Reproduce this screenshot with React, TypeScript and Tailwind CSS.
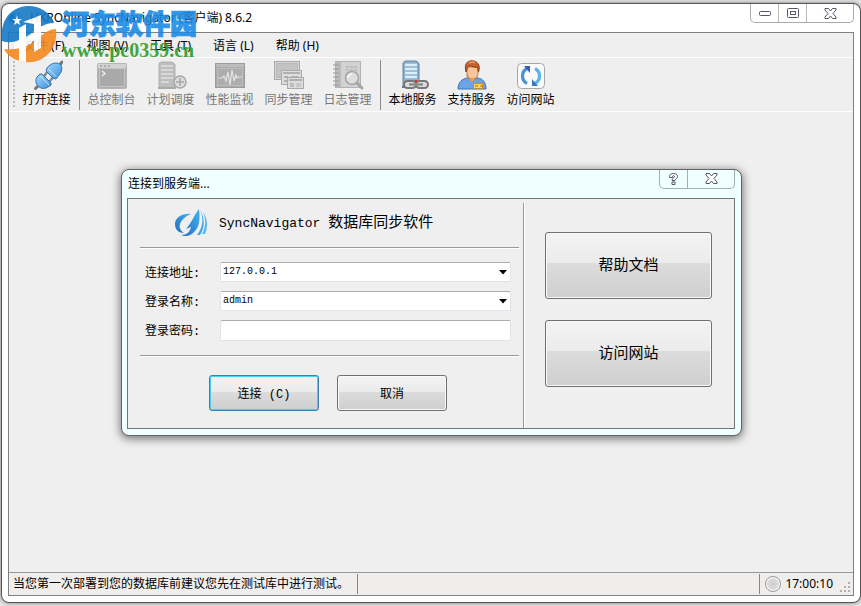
import React from 'react';
import clsx from 'clsx';

const UI_FONT = 'font-["Noto_Sans","Noto_Sans_CJK_SC",sans-serif]';
const SONG_FONT = 'font-["Liberation_Mono","Noto_Sans_CJK_SC",monospace]';

const menus = ['文件 (F)', '视图 (V)', '工具 (T)', '语言 (L)', '帮助 (H)'];

function PlugIcon() {
  return (
    <svg width="32" height="32" viewBox="0 0 32 32">
      <defs>
        <linearGradient id="plug" x1="0" y1="0" x2="1" y2="1">
          <stop offset="0" stopColor="#a5dafc" />
          <stop offset="1" stopColor="#3a8fdc" />
        </linearGradient>
      </defs>
      <g strokeLinecap="round">
        <path d="M4.500 28.500L8 25" stroke="#777" strokeWidth="3" />
        <path d="M28 6l3-4" stroke="#777" strokeWidth="3" />
        <path d="M12.500 17l3-4M18 22l3.500-4" stroke="#868686" strokeWidth="2.500" />
      </g>
      <path d="M6 17l3-3h2l9 9v2l-3 2c-3 2-7 2-10-1-2-2-3-6-1-9z" fill="url(#plug)" stroke="#2f72b4" />
      <path d="M16 8c4-5 9-6 13-4 3 3 2 8-1 11l-3 4-3-1-7-7z" fill="url(#plug)" stroke="#2f72b4" />
      <path d="M9 16l9 9M17 8.500l8 8" stroke="#c7e9ff" strokeWidth="1" fill="none" />
    </svg>
  );
}

function ConsoleIcon() {
  return (
    <svg width="32" height="32" viewBox="0 0 32 32">
      <rect x="1.500" y="3.500" width="29" height="25" rx="1" fill="#adadad" stroke="#b4b4b4" />
      <rect x="2" y="4" width="28" height="4" fill="#d3d3d3" />
      <path d="M4 6h2M8 6h2M12 6h2" stroke="#a0a0a0" strokeWidth="1.500" />
      <rect x="3.500" y="8.500" width="25" height="18" fill="#a9a9a9" stroke="#c4c4c4" />
      <path d="M6 11l3 2.500L6 16" fill="none" stroke="#eee" strokeWidth="1.500" />
    </svg>
  );
}

function ScheduleIcon() {
  return (
    <svg width="32" height="32" viewBox="0 0 32 32">
      <path d="M4 4q0-2 3-2h9q3 0 4 3v23H4z" fill="#bdbdbd" stroke="#b0b0b0" />
      <path d="M6 6h12M6 10h12M6 14h12M6 18h12M6 22h8" stroke="#d8d8d8" strokeWidth="2" />
      <path d="M3 28h18" stroke="#a9a9a9" strokeWidth="2" />
      <circle cx="25" cy="22" r="6" fill="#dcdcdc" stroke="#a6a6a6" strokeWidth="1.500" />
      <path d="M25 18v8M21 22h8" stroke="#a6a6a6" strokeWidth="1.500" />
    </svg>
  );
}

function MonitorIcon() {
  return (
    <svg width="32" height="32" viewBox="0 0 32 32">
      <rect x="1.500" y="3.500" width="29" height="24" fill="#aaa" stroke="#9c9c9c" />
      <path d="M2 5.500h28" stroke="#bcbcbc" strokeWidth="3" />
      <rect x="3.500" y="8.500" width="25" height="17" fill="#adadad" stroke="#bdbdbd" />
      <path d="M4 18h4l2-2 2 5 2-9 2 13 2-15 2 11 2-6 1 3 2-1h3" fill="none" stroke="#e4e4e4" strokeWidth="1.200" />
    </svg>
  );
}

function SyncIcon() {
  return (
    <svg width="32" height="32" viewBox="0 0 32 32" stroke="#a9a9a9">
      <rect x="1.500" y="1.500" width="25" height="18" fill="#d8d8d8" />
      <rect x="3.500" y="3.500" width="21" height="14" fill="#c3c3c3" stroke="#b8b8b8" />
      <rect x="8.500" y="10.500" width="20" height="14" fill="#ddd" />
      <path d="M10 13h17M11 17h4M18 17h7M11 21h4" stroke="#b0b0b0" strokeWidth="2" />
      <rect x="14.500" y="17.500" width="16" height="11" fill="#ddd" />
      <path d="M16 20h13" stroke="#b0b0b0" strokeWidth="2" />
      <rect x="17" y="23" width="4" height="4" fill="#bdbdbd" stroke="none" />
      <rect x="23" y="23" width="5" height="4" fill="#c8c8c8" stroke="none" />
    </svg>
  );
}

function LogIcon() {
  return (
    <svg width="32" height="32" viewBox="0 0 32 32">
      <rect x="3.500" y="1.500" width="25" height="26" fill="#d2d2d2" stroke="#b2b2b2" />
      <rect x="4" y="2" width="5" height="25" fill="#bababa" />
      <path d="M1 5h6M1 9h6M1 13h6M1 17h6M1 21h6M1 25h6" stroke="#999" strokeWidth="1.200" />
      <path d="M14 7h11M14 10h11M14 13h6" stroke="#bdbdbd" strokeWidth="2" strokeDasharray="3 1" />
      <circle cx="20" cy="18" r="6.500" fill="#dedede" stroke="#a5a5a5" strokeWidth="1.500" />
      <path d="M16 18a4 4 0 0 1 4-4" stroke="#f4f4f4" strokeWidth="2" fill="none" />
      <path d="M25 23l5 5" stroke="#a5a5a5" strokeWidth="3" strokeLinecap="round" />
    </svg>
  );
}

function ServerIcon() {
  return (
    <svg width="32" height="32" viewBox="0 0 32 32">
      <path d="M6 3q1-2 3-2h9q3 0 4 3v23H6z" fill="#8cb0cc" stroke="#6486a0" />
      <path d="M8 5h12M8 9h12M8 13h12M8 17h12" stroke="#d9edfb" strokeWidth="2.500" />
      <path d="M5 27h9" stroke="#57788f" strokeWidth="2" />
      <rect x="7" y="21" width="12" height="7" rx="3.500" fill="#ddd" stroke="#777" strokeWidth="2" />
      <rect x="19" y="21" width="12" height="7" rx="3.500" fill="#ddd" stroke="#777" strokeWidth="2" />
      <path d="M12 24.500h14" stroke="#8c8c8c" strokeWidth="2.500" />
      <path d="M18 21h2" stroke="#e02626" strokeWidth="2" />
    </svg>
  );
}

function SupportIcon() {
  return (
    <svg width="32" height="32" viewBox="0 0 32 32">
      <path d="M2 29c0-7 4-10 9-11h11c5 1 8 4 8 11z" fill="#6ba4e4" stroke="#3f76b8" />
      <path d="M11 17l5 5 5-5v-3H11z" fill="#eeb27d" stroke="#c77a3c" strokeWidth=".8" />
      <path d="M11 7h11v6c0 4-3 6-6 6s-5-3-5-6z" fill="#f8c69a" stroke="#c97a40" />
      <path d="M10 12C8 4 11 .8 16 .8S25 5 22.500 12l-1-5c-3 1-5-1-7-1l-3 1z" fill="#c8632b" stroke="#8f3d14" />
      <path d="M13 3q4-2 6 0" stroke="#ef9a62" strokeWidth="1.500" fill="none" />
      <rect x="17.500" y="23.500" width="9" height="5" fill="#ffd65c" stroke="#d1881c" />
      <path d="M19 26h3M24 26h2" stroke="#aa671a" />
    </svg>
  );
}

function WebIcon() {
  return (
    <svg width="32" height="32" viewBox="0 0 32 32">
      <rect x="2.500" y="3.500" width="27" height="25" rx="4" fill="#fafafa" stroke="#a7a7a7" />
      <path d="M12 8.500a8.500 8.500 0 0 0 0 15" fill="none" stroke="#4a90dc" strokeWidth="3.200" />
      <path d="M20 23.500a8.500 8.500 0 0 0 0-15" fill="none" stroke="#59b4ec" strokeWidth="3.200" />
      <path d="M9 6h6v7z" fill="#335fae" />
      <path d="M23 26h-6v-7z" fill="#3977c4" />
    </svg>
  );
}

type Tool = { label: string; icon: React.ReactNode; disabled?: boolean };

const toolGroups: Tool[][] = [
  [{ label: '打开连接', icon: <PlugIcon /> }],
  [
    { label: '总控制台', icon: <ConsoleIcon />, disabled: true },
    { label: '计划调度', icon: <ScheduleIcon />, disabled: true },
    { label: '性能监视', icon: <MonitorIcon />, disabled: true },
    { label: '同步管理', icon: <SyncIcon />, disabled: true },
    { label: '日志管理', icon: <LogIcon />, disabled: true },
  ],
  [
    { label: '本地服务', icon: <ServerIcon /> },
    { label: '支持服务', icon: <SupportIcon /> },
    { label: '访问网站', icon: <WebIcon /> },
  ],
];

function CloseGlyph() {
  return (
    <svg width="13" height="11" viewBox="0 0 13 11">
      <path
        d="M1 .5h3.500l2 2.500 2-2.500H12v1.500L9 5.500l3 3.500v1.500H8.500l-2-2.500-2 2.500H1V9l3-3.500L1 2z"
        fill="#fff"
        stroke="#555568"
      />
    </svg>
  );
}

function Toolbar() {
  return (
    <div className="flex h-[55px] items-stretch border-y border-white bg-[#efefef] pb-px pl-1 pt-[2px]">
      {/* drag grip */}
      <div className="my-px mr-[2px] w-[2px] bg-[repeating-linear-gradient(to_bottom,#bbb_0_2px,transparent_2px_4px)]" />
      {toolGroups.map((group, i) => (
        <React.Fragment key={i}>
          {i > 0 && <div className="ml-[3px] mr-[2px] w-px bg-[#8a8a8a]" />}
          {group.map((tool) => (
            <button
              key={tool.label}
              disabled={tool.disabled}
              className={clsx(
                'flex w-[59px] flex-col items-center whitespace-nowrap text-xs leading-4',
                tool.disabled ? 'text-[#777]' : 'text-black'
              )}
            >
              {tool.icon}
              {tool.label}
            </button>
          ))}
        </React.Fragment>
      ))}
    </div>
  );
}

function Rule() {
  return <hr className="h-[2px] border-0 border-b border-t border-b-white border-t-[#999]" />;
}

function ComboBox({ id, value }: { id: string; value: string }) {
  return (
    <div className="relative flex-1">
      <select
        id={id}
        defaultValue={value}
        className="block h-5 w-full appearance-none rounded-xs border border-[#e2e3ea] border-t-[#abadb3] bg-white px-[2px] text-[10px] leading-4 text-black"
      >
        <option>{value}</option>
      </select>
      <svg className="pointer-events-none absolute right-1 top-2" width="8" height="5" viewBox="0 0 8 5">
        <path d="M0 0h8L4 4.500z" fill="#000" />
      </svg>
    </div>
  );
}

const glossy = 'bg-[linear-gradient(#f3f3f3_0%,#ebebeb_46%,#dcdcdc_47%,#cfcfcf_100%)]';

function PushButton({ children, primary, large }: { children: React.ReactNode; primary?: boolean; large?: boolean }) {
  return (
    <button
      className={clsx(
        'rounded-[3px] border pt-1 text-black',
        glossy,
        large ? 'h-[67px] w-full text-[15px]' : 'h-9 w-[110px] text-xs',
        primary
          ? 'border-[#3c7fb1] shadow-[inset_0_0_0_1px_#48d0f8]'
          : 'border-[#707070] shadow-[inset_0_0_0_1px_#fafafa]'
      )}
    >
      {children}
    </button>
  );
}

function SyncLogo() {
  return (
    <svg width="32" height="28" viewBox="0 0 32 28">
      <defs>
        <linearGradient id="sync" x1="0" y1="1" x2="1" y2="0">
          <stop offset="0" stopColor="#246bc2" />
          <stop offset="1" stopColor="#43b4ee" />
        </linearGradient>
      </defs>
      <path d="M16 5C7 4 0 9 0 15c0 6 4 9 9 9-4-3-5-6-4-9 2-5 6-8 11-10z" fill="url(#sync)" />
      <path d="M24 0c1 9 1 17-4 22-4 5-9 6-14 4 6 0 9-3 10-8l-5 2c5-5 8-14 13-20z" fill="url(#sync)" />
      <path d="M25 1c4 9 3 17-3 25h3c5-8 5-16 0-25z" fill="#3fa5e2" />
      <path d="M28 3c3 7 3 15-1 22h3c3-7 3-15-2-22z" fill="#58b9ed" />
    </svg>
  );
}

function ConnectDialog() {
  return (
    <section
      role="dialog"
      aria-label="连接到服务端"
      className="w-full max-w-[621px] rounded-lg border border-[#5e6565] bg-[#f0ffff] pb-[6px] pl-[5px] pr-[6px] shadow-[0_2px_8px_1px_rgba(0,0,0,0.5)]"
    >
      <header className="flex h-7 items-start justify-between">
        <h2 className="pl-px pt-[6px] text-xs leading-4">连接到服务端...</h2>
        <div className="flex h-[19px] divide-x divide-[#a5adad] rounded-b-[5px] border border-t-0 border-[#a5adad]">
          <button aria-label="帮助" className="flex w-7 items-center justify-center">
            <svg width="9" height="12" viewBox="0 0 9 12">
              <path
                d="M.5 3.500C.5 1.500 2 .5 4.500.5s4 1 4 3c0 2-2.500 2.500-2.500 4H3c0-2 2.500-3 2.500-4 0-1-2-1-2 0v1h-3zM3 9h3v2.500H3z"
                fill="#fff"
                stroke="#555568"
              />
            </svg>
          </button>
          <button aria-label="关闭" className="flex w-[46px] items-center justify-center">
            <CloseGlyph />
          </button>
        </div>
      </header>
      <div className={clsx('flex h-[231px] border border-[#707575] bg-[#efefef]', SONG_FONT)}>
        <form className="flex-1 pl-3 pr-1" onSubmit={(e) => e.preventDefault()}>
          <div className="flex h-12 items-center gap-3 pl-[35px]">
            <SyncLogo />
            <h1 className="whitespace-pre pt-[2px] text-[15px] leading-5">
              <span className="text-[13px]">SyncNavigator </span>数据库同步软件
            </h1>
          </div>
          <Rule />
          <div className="flex flex-col gap-[9px] pb-[14px] pl-[5px] pr-2 pt-[13px] text-xs">
            <div className="flex h-5 items-center">
              <label htmlFor="address" className="w-[75px] pt-1">连接地址:</label>
              <ComboBox id="address" value="127.0.0.1" />
            </div>
            <div className="flex h-5 items-center">
              <label htmlFor="username" className="w-[75px] pt-1">登录名称:</label>
              <ComboBox id="username" value="admin" />
            </div>
            <div className="flex h-[21px] items-center">
              <label htmlFor="password" className="w-[75px] pt-1">登录密码:</label>
              <input
                id="password"
                type="password"
                className="h-full min-w-0 flex-1 rounded-xs border border-[#e2e3ea] border-t-[#abadb3] bg-white px-1"
              />
            </div>
          </div>
          <Rule />
          <div className="flex justify-center gap-[18px] pr-[3px] pt-[18px]">
            <PushButton primary>连接 (C)</PushButton>
            <PushButton>取消</PushButton>
          </div>
        </form>
        <div className="mt-1 w-[2px] border-l border-r border-l-[#999] border-r-white" />
        <div className="flex w-[209px] flex-col gap-[21px] pl-5 pr-[22px] pt-[33px]">
          <PushButton large>帮助文档</PushButton>
          <PushButton large>访问网站</PushButton>
        </div>
      </div>
    </section>
  );
}

function StatusBar() {
  return (
    <footer className="flex h-[23px] items-center border-t border-[#999] bg-[#f0eded] text-xs">
      <span className="flex h-5 items-center border-r border-[#888] pl-1 pr-2">
        当您第一次部署到您的数据库前建议您先在测试库中进行测试。
      </span>
      <span className="ml-auto flex h-5 items-center gap-1 border-l border-[#888] pl-[5px]">
        <span className="size-4 rounded-full border border-[#999] bg-[radial-gradient(#d0d0d0,#e4e4e4)] shadow-[inset_0_0_0_1px_#fff]" />
        <time>17:00:10</time>
      </span>
      <svg className="ml-[6px] mr-[2px] self-end" width="12" height="14" viewBox="0 0 12 14" fill="#b5b0b0">
        <path d="M9 1h2v2H9zM9 5h2v2H9zM5 5h2v2H5zM9 9h2v2H9zM5 9h2v2H5zM1 9h2v2H1z" />
      </svg>
    </footer>
  );
}

function Watermark() {
  return (
    <div className="pointer-events-none absolute left-0 top-1 z-20 flex gap-1 opacity-90">
      <svg width="58" height="60" viewBox="0 0 58 60">
        <path d="M2 37C0 18 9 3 28 2c12 0 22 6 26 17C44 19 37 25 29 31 20 37 11 40 2 37z" fill="#1579c6" />
        <path d="M4 45c18 2 29-6 37-13 5-4 9-7 15-7 2 16-7 30-23 33C20 59 9 55 4 45z" fill="#f58a1f" />
        <path d="M19 24l7-4v15l8-5V20l-11-2 18-7v33l-7 4V37l-8 5v16l-7-1V44l-5 1v-6l5-3z" fill="#fff" />
        <path d="M17 11l1 4 4 0-3 2 1 4-3-2-3 2 1-4-3-2h4z" fill="#fff" />
      </svg>
      <div className="whitespace-nowrap pt-[6px] font-bold">
        <div className="font-['Liberation_Serif','Noto_Sans_CJK_SC',serif] text-[27px] font-black leading-[30px] text-[#1b8be6] [-webkit-text-stroke:1px_#1b8be6]">
          河东软件园
        </div>
        <div className="font-['Liberation_Serif',serif] text-[20px] leading-5 text-[#2f9e2b]">www.pc0359.cn</div>
      </div>
    </div>
  );
}

export default function App() {
  return (
    <div className={clsx('relative h-screen overflow-hidden bg-[#e6e6e6] py-[3px] pl-px text-black', UI_FONT)}>
      <div className="flex h-full flex-col rounded-lg border border-[#555] bg-white px-[6px] pb-[6px] shadow-[0_0_4px_rgba(0,0,0,0.5)]">
        <header className="flex h-7 items-start justify-between">
          <div className="flex h-7 items-center gap-[6px]">
            <svg width="16" height="16" viewBox="0 0 32 28">
              <path d="M14 5C6 5 1 9 1 15s5 9 12 9c7-2 9-16 11-24-5 6-8 16-13 20" fill="#2a7fd0" />
            </svg>
            <h1 className="text-xs leading-4">HKROnline SyncNavigator (客户端) 8.6.2</h1>
          </div>
          <div className="flex h-[19px] divide-x divide-[#bbb] rounded-b-[5px] border border-t-0 border-[#aaa]">
            <button aria-label="最小化" className="flex w-7 items-center justify-center">
              <svg width="12" height="5" viewBox="0 0 12 5">
                <rect x=".5" y=".5" width="11" height="4" rx="1" fill="#fff" stroke="#555568" />
              </svg>
            </button>
            <button aria-label="最大化" className="flex w-7 items-center justify-center">
              <svg width="12" height="10" viewBox="0 0 12 10" fill="#fff" stroke="#555568">
                <rect x=".5" y=".5" width="11" height="9" rx="1" />
                <rect x="3.500" y="3.500" width="5" height="3" />
              </svg>
            </button>
            <button aria-label="关闭" className="flex w-[46px] items-center justify-center">
              <CloseGlyph />
            </button>
          </div>
        </header>
        <div className="flex min-h-0 flex-1 flex-col border border-[#808080] bg-[#efefef]">
          <nav className="flex h-6 items-center gap-[22px] pl-[15px] pt-px text-xs">
            {menus.map((menu) => (
              <button key={menu} className="whitespace-nowrap leading-4">
                {menu}
              </button>
            ))}
          </nav>
          <Toolbar />
          <main className="flex-1" />
          <StatusBar />
        </div>
      </div>

      <div className="absolute inset-x-0 bottom-[2px] top-0 z-10 flex items-center justify-center pl-[2px]">
        <ConnectDialog />
      </div>
      <Watermark />
    </div>
  );
}
